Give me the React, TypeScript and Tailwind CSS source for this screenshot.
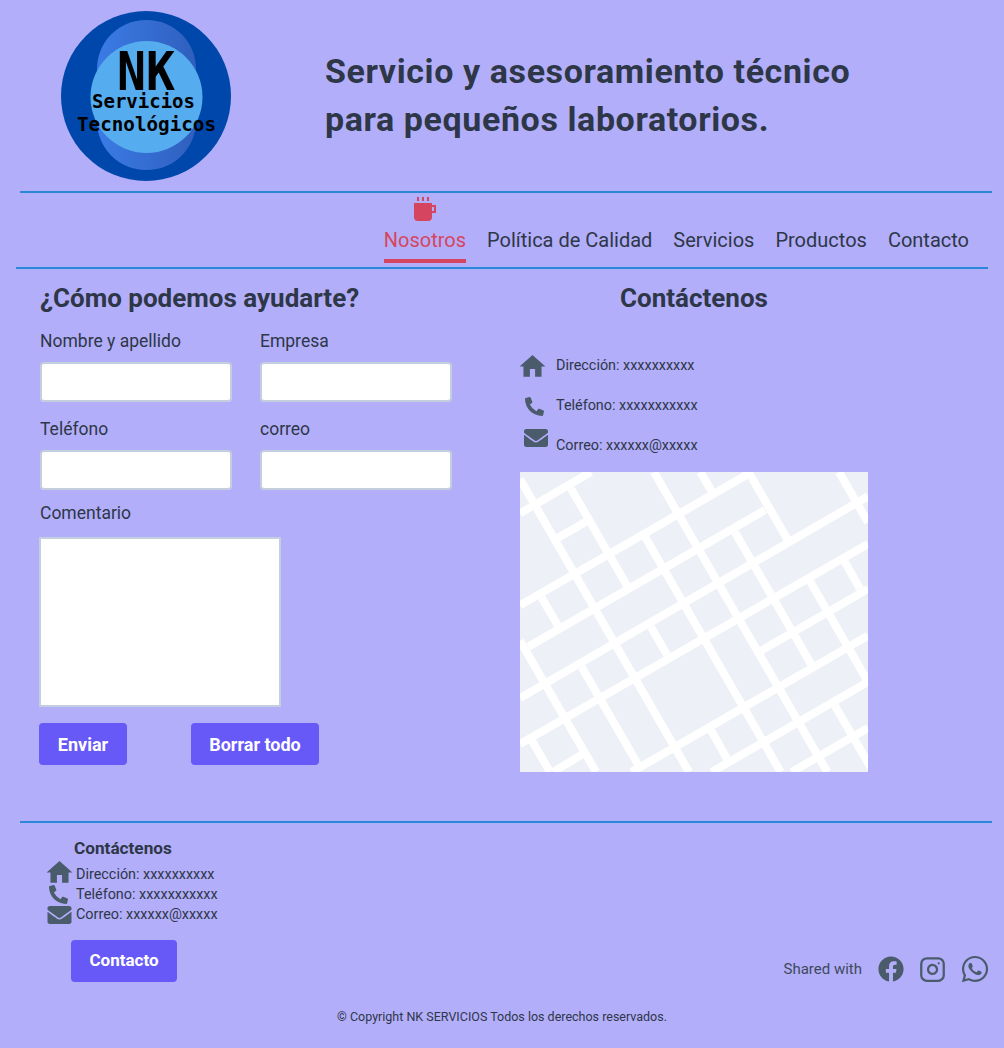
import React from "react";
import { FaPhoneAlt, FaEnvelope, FaFacebook, FaWhatsapp } from "react-icons/fa";
import { FiInstagram } from "react-icons/fi";
import { MdHome } from "react-icons/md";

const NavItems = [
  { name: "Nosotros", active: true },
  { name: "Política de Calidad" },
  { name: "Servicios" },
  { name: "Productos" },
  { name: "Contacto" },
];

// street centre lines, traced from the map at 3x
const Streets = [
  [15, 136, 228, 12],
  [15, 412, 710, 12],
  [40, 536, 750, 126],
  [15, 690, 1059, 85],
  [15, 828, 1059, 228],
  [350, 912, 1059, 503],
  [590, 912, 1059, 642],
  [830, 912, 1059, 780],
  [128, 210, 212, 162],
  [735, 550, 1059, 363],
  [115, 912, 200, 860],
  [15, 34, 522, 912],
  [15, 518, 243, 912],
  [168, 62, 337, 355],
  [417, 12, 937, 912],
  [556, 12, 590, 70],
  [702, 15, 818, 215],
  [660, 193, 895, 600],
  [385, 197, 797, 912],
  [972, 12, 1059, 163],
  [885, 340, 1059, 641],
  [988, 280, 1035, 362],
  [960, 713, 1075, 912],
  [80, 389, 128, 472],
  [200, 597, 372, 895],
  [408, 477, 456, 560],
  [588, 787, 636, 872],
  [52, 820, 105, 912],
];

const Logo = () => (
  <svg viewBox="0 0 170 170" className="w-[170px] h-[170px]">
    <defs>
      <linearGradient id="ring" x1="0" y1="0" x2="1" y2="0">
        <stop offset="0" stopColor="#3b7be6" />
        <stop offset="1" stopColor="#2f5fbd" />
      </linearGradient>
    </defs>
    <circle cx="85" cy="85" r="85" fill="#0047ab" />
    <rect x="36" y="9" width="99" height="150" rx="49" fill="url(#ring)" />
    <circle cx="85.5" cy="86" r="56" fill="#55acee" />
    <text x="85" y="79" textAnchor="middle" fontFamily="'DejaVu Sans Mono', monospace" fontWeight="700" fontSize="54" textLength="58" lengthAdjust="spacingAndGlyphs" fill="#000">NK</text>
    <text x="82.5" y="97" textAnchor="middle" fontFamily="'DejaVu Sans Mono', monospace" fontWeight="700" fontSize="20" textLength="103" lengthAdjust="spacingAndGlyphs" fill="#000">Servicios</text>
    <text x="85.5" y="120" textAnchor="middle" fontFamily="'DejaVu Sans Mono', monospace" fontWeight="700" fontSize="20" textLength="139" lengthAdjust="spacingAndGlyphs" fill="#000">Tecnológicos</text>
  </svg>
);

const Mug = () => (
  <svg viewBox="0 0 22 24" className="block w-[22px] h-6" fill="#d6455f">
    <rect x="3" y="0" width="2" height="4" />
    <rect x="8" y="0" width="2" height="4" />
    <rect x="13" y="0" width="2" height="4" />
    <path d="M0 6h18v2h4v8h-4v4a4 4 0 0 1-4 4H4a4 4 0 0 1-4-4z M18 10v4h2v-4z" fillRule="evenodd" />
  </svg>
);

const Field = ({ label }: { label: string }) => (
  <div className="w-[192px]">
    <label className="block text-[17.5px] leading-6">{label}</label>
    <input className="block mt-[9px] w-full h-10 bg-white rounded border-2 border-[#c3cfdd]" />
  </div>
);

const Map = () => (
  <svg viewBox="15 12 1044 900" className="block w-[348px] h-[300px] bg-[#edf0f6]">
    {Streets.map((s, i) => (
      <line key={i} x1={s[0]} y1={s[1]} x2={s[2]} y2={s[3]} stroke="#fff" strokeWidth="24" />
    ))}
  </svg>
);

const App = () => {
  return (
    <div className="w-[1004px] h-[1048px] bg-[#b3aefa] font-['Roboto',sans-serif] text-[#2d3748] overflow-hidden">
      <header className="flex items-center h-[191px] pl-[61px]">
        <Logo />
        <h1 className="ml-[94px] -mt-0.5 text-[34px] leading-12 font-bold tracking-[0.6px]">
          Servicio y asesoramiento técnico
          <br />
          para pequeños laboratorios.
        </h1>
      </header>

      <hr className="ml-5 w-[972px] border-t-2 border-[#2b88d8]" />

      <nav className="flex justify-end items-end gap-[21px] ml-4 w-[972px] h-[74px] pr-[19px] pb-1">
        {NavItems.map((item) => (
          <a
            key={item.name}
            href="#"
            className={
              item.active
                ? "relative h-[35px] text-[20px] leading-6 text-[#d6455f] border-b-4 border-[#d6455f]"
                : "h-[35px] text-[20px] leading-6"
            }
          >
            {item.active && (
              <span className="absolute -top-[31px] left-[30px]">
                <Mug />
              </span>
            )}
            {item.name}
          </a>
        ))}
      </nav>
      <hr className="ml-4 w-[972px] border-t-2 border-[#2b88d8]" />

      <main className="flex h-[552px] pt-[15px]">
        <section className="w-[520px] pl-10">
          <h2 className="text-[26px] leading-7 font-bold">¿Cómo podemos ayudarte?</h2>
          <div className="flex gap-7 mt-[17px]">
            <Field label="Nombre y apellido" />
            <Field label="Empresa" />
          </div>
          <div className="flex gap-7 mt-[15px]">
            <Field label="Teléfono" />
            <Field label="correo" />
          </div>
          <label className="block mt-[11px] text-[17.5px] leading-6">Comentario</label>
          <textarea className="block mt-3 -ml-px w-[242px] h-[170px] bg-white border-2 border-[#c3cfdd] resize-none" />
          <div className="flex gap-16 mt-4 -ml-px">
            <button className="w-[88px] h-[42px] rounded bg-[#6659f7] text-white text-[18px] font-bold">Enviar</button>
            <button className="w-[128px] h-[42px] rounded bg-[#6659f7] text-white text-[18px] font-bold">Borrar todo</button>
          </div>
        </section>

        <section className="w-[348px]">
          <h2 className="text-[26px] leading-7 font-bold text-center">Contáctenos</h2>
          <ul className="mt-[34px] text-[14.4px] leading-5">
            <li className="flex items-center h-10">
              <MdHome className="w-[31px] h-[31px] -ml-[3px] text-[#4a5b6c]" />
              <span className="ml-2">Dirección: xxxxxxxxxx</span>
            </li>
            <li className="flex items-center h-10">
              <FaPhoneAlt className="ml-[5px] w-[19px] h-[19px] text-[#4a5b6c]" />
              <span className="ml-3">Teléfono: xxxxxxxxxxx</span>
            </li>
            <li className="flex items-center h-10">
              <FaEnvelope className="ml-1 -mt-4 w-6 h-6 text-[#4a5b6c]" />
              <span className="ml-2">Correo: xxxxxx@xxxxx</span>
            </li>
          </ul>
          <div className="mt-1.5">
            <Map />
          </div>
        </section>
      </main>

      <hr className="ml-5 w-[972px] border-t-2 border-[#2b88d8]" />

      <footer className="relative">
        <div className="pl-[47px] pt-[15px]">
          <h3 className="ml-[27px] text-[17.2px] leading-5 font-bold">Contáctenos</h3>
          <ul className="text-[14.4px] leading-5 mt-[7px]">
            <li className="flex items-center h-5">
              <MdHome className="w-[31px] h-[31px] -ml-[3px] -mr-[3px] -mt-1.5 text-[#4a5b6c]" />
              <span className="ml-[4px]">Dirección: xxxxxxxxxx</span>
            </li>
            <li className="flex items-center h-5">
              <FaPhoneAlt className="ml-[2px] -mt-0.5 w-[19px] h-[19px] text-[#4a5b6c]" />
              <span className="ml-2">Teléfono: xxxxxxxxxxx</span>
            </li>
            <li className="flex items-center h-5">
              <FaEnvelope className="w-[25px] h-[24px] text-[#4a5b6c]" />
              <span className="ml-[4px]">Correo: xxxxxx@xxxxx</span>
            </li>
          </ul>
          <button className="block ml-6 mt-[15px] w-[106px] h-[42px] rounded bg-[#6659f7] text-white text-[17px] font-bold">Contacto</button>
        </div>
        <div className="absolute right-[14px] top-[131px] flex items-center text-[15px] text-[#3d4a5c]">
          <span>Shared with</span>
          <FaFacebook className="ml-4 w-[26px] h-[26px] text-[#4a5b6c]" />
          <FiInstagram className="ml-[15px] w-[27px] h-[27px] text-[#4a5b6c]" />
          <FaWhatsapp className="ml-[14px] w-[30px] h-[30px] text-[#4a5b6c]" />
        </div>
        <p className="mt-[27px] text-center text-[12.5px] leading-4">© Copyright NK SERVICIOS Todos los derechos reservados.</p>
      </footer>
    </div>
  );
};

export default App;
